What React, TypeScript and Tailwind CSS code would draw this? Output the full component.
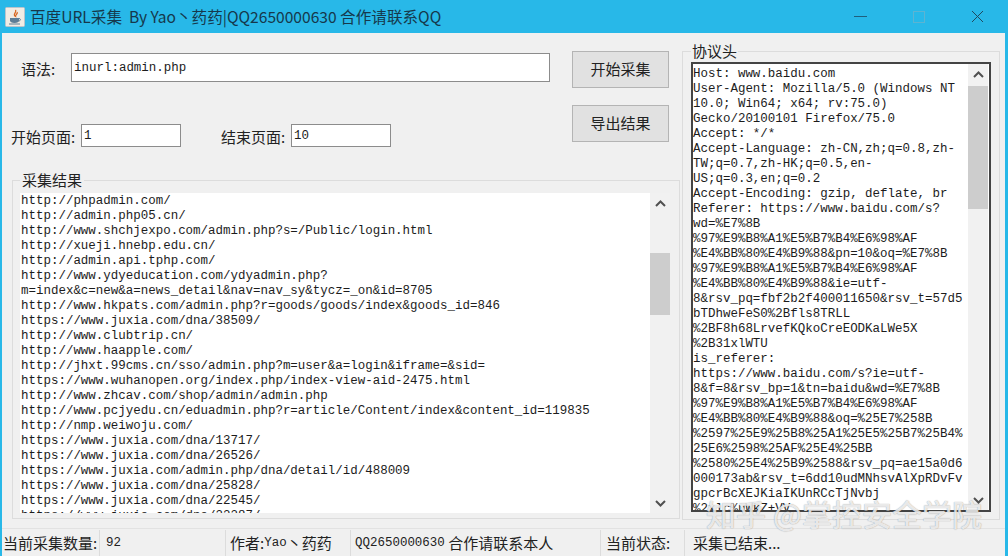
const CJK = "font-['Noto_Sans_CJK_SC','Noto_Sans',sans-serif]";
const MONO = "font-['Liberation_Mono','Noto_Sans_CJK_SC',monospace]";

const RESULT_LINES = [
	"http://phpadmin.com/",
	"http://admin.php05.cn/",
	"http://www.shchjexpo.com/admin.php?s=/Public/login.html",
	"http://xueji.hnebp.edu.cn/",
	"http://admin.api.tphp.com/",
	"http://www.ydyeducation.com/ydyadmin.php?",
	"m=index&c=new&a=news_detail&nav=nav_sy&tycz=_on&id=8705",
	"http://www.hkpats.com/admin.php?r=goods/goods/index&goods_id=846",
	"https://www.juxia.com/dna/38509/",
	"http://www.clubtrip.cn/",
	"http://www.haapple.com/",
	"http://jhxt.99cms.cn/sso/admin.php?m=user&a=login&iframe=&sid=",
	"https://www.wuhanopen.org/index.php/index-view-aid-2475.html",
	"http://www.zhcav.com/shop/admin/admin.php",
	"http://www.pcjyedu.cn/eduadmin.php?r=article/Content/index&content_id=119835",
	"http://nmp.weiwoju.com/",
	"https://www.juxia.com/dna/13717/",
	"https://www.juxia.com/dna/26526/",
	"https://www.juxia.com/admin.php/dna/detail/id/488009",
	"https://www.juxia.com/dna/25828/",
	"https://www.juxia.com/dna/22545/",
	"https://www.juxia.com/dna/22287/",
];

const HEADER_LINES = [
	"Host: www.baidu.com",
	"User-Agent: Mozilla/5.0 (Windows NT",
	"10.0; Win64; x64; rv:75.0)",
	"Gecko/20100101 Firefox/75.0",
	"Accept: */*",
	"Accept-Language: zh-CN,zh;q=0.8,zh-",
	"TW;q=0.7,zh-HK;q=0.5,en-",
	"US;q=0.3,en;q=0.2",
	"Accept-Encoding: gzip, deflate, br",
	"Referer: https://www.baidu.com/s?",
	"wd=%E7%8B",
	"%97%E9%B8%A1%E5%B7%B4%E6%98%AF",
	"%E4%BB%80%E4%B9%88&pn=10&oq=%E7%8B",
	"%97%E9%B8%A1%E5%B7%B4%E6%98%AF",
	"%E4%BB%80%E4%B9%88&ie=utf-",
	"8&rsv_pq=fbf2b2f400011650&rsv_t=57d5",
	"bTDhweFeS0%2Bfls8TRLL",
	"%2BF8h68LrvefKQkoCreEODKaLWe5X",
	"%2B31xlWTU",
	"is_referer:",
	"https://www.baidu.com/s?ie=utf-",
	"8&f=8&rsv_bp=1&tn=baidu&wd=%E7%8B",
	"%97%E9%B8%A1%E5%B7%B4%E6%98%AF",
	"%E4%BB%80%E4%B9%88&oq=%25E7%258B",
	"%2597%25E9%25B8%25A1%25E5%25B7%25B4%",
	"25E6%2598%25AF%25E4%25BB",
	"%2580%25E4%25B9%2588&rsv_pq=ae15a0d6",
	"000173ab&rsv_t=6dd10udMNhsvAlXpRDvFv",
	"gpcrBcXEJKiaIKUnRCcTjNvbj",
	"%2xlc%uWkZ+VV",
];

const JavaIcon = () => (
	<svg width="20" height="20" viewBox="0 0 20 20" className="shrink-0">
		<rect x="0.5" y="0.5" width="19" height="19" rx="1" fill="#f1ece4" stroke="#b9c4cc" />
		<path d="M10.5 3c1.500 2-2 3.500-1 5.500.4.8 1 1 1 1-.6-1.400 2.800-2.800 1.600-4.500" fill="none" stroke="#d9661f" strokeWidth="1.300" />
		<path d="M5 11h9v2.500c0 1.500-1.500 2.500-4.500 2.500S5 15 5 13.500z" fill="#5d7d96" />
		<path d="M14 11.500c2 0 2 2.500-.5 2.500" fill="none" stroke="#5d7d96" />
		<path d="M4 17h11" stroke="#5d7d96" />
	</svg>
);

const Chevron = ({ down }: { down?: boolean }) => (
	<svg width="11" height="7" viewBox="0 0 11 7">
		<path
			d={down ? "M1 1l4.500 4.500L10 1" : "M1 6l4.500-4.500L10 6"}
			fill="none"
			stroke="#505050"
			strokeWidth="2"
		/>
	</svg>
);

const ScrollBar = ({ thumbTop, thumbHeight }: { thumbTop: string; thumbHeight: string }) => (
	<div className="w-5 shrink-0 h-full flex flex-col items-center bg-[#f1f1f1]">
		<div className="h-5 flex items-center justify-center shrink-0">
			<Chevron />
		</div>
		<div className={`w-full bg-[#cdcdcd] ${thumbTop} ${thumbHeight}`} />
		<div className="mt-auto h-5 flex items-center justify-center shrink-0">
			<Chevron down />
		</div>
	</div>
);

const TextLines = ({ lines, className }: { lines: string[]; className: string }) => (
	<div className={`flex-1 overflow-hidden whitespace-pre leading-[15px] text-[12.47px] text-[#1c1c1c] ${MONO} ${className}`}>
		{lines.map((line, i) => (
			<div key={i}>{line}</div>
		))}
	</div>
);

const ActionButton = ({ label, className }: { label: string; className?: string }) => (
	<button
		type="button"
		className={`block w-[97px] h-[37px] bg-[#e1e1e1] border border-[#b4b4b4] text-[15px] text-[#222] ${CJK} ${className || ""}`}
	>
		{label}
	</button>
);

const StatusCell = ({ className, children }: { className: string; children: React.ReactNode }) => (
	<div className={`h-full flex items-center border-r border-[#dcdcdc] whitespace-pre ${className}`}>
		{children}
	</div>
);

const App = () => {
	return (
		<div className={`relative w-[1008px] h-[556px] overflow-hidden flex flex-col bg-[#28b8e8] ${CJK}`}>
			{/* title bar */}
			<div className="h-[33px] shrink-0 flex items-center pl-[5px] text-[#16384c]">
				<JavaIcon />
				<span className="ml-[5px] text-[15.6px] whitespace-pre">
					百度URL采集  By Yao丶药药|QQ2650000630 合作请联系QQ
				</span>
				<div className="ml-auto flex items-center">
					<div className="w-[13px] h-px bg-[#1f5f7d] mr-[46px]" />
					<div className="w-[12px] h-[12px] border border-[#5cb4d2] mr-[46px]" />
					<svg width="13" height="13" viewBox="0 0 13 13" className="mr-[24px]">
						<path d="M1 1l11 11M12 1L1 12" stroke="#1f4a60" strokeWidth="1" />
					</svg>
				</div>
			</div>

			{/* window body */}
			<div className="flex-1 min-h-0 ml-[2px] mr-[3px] bg-[#f0f0f0] flex flex-col">
				<div className="flex-1 min-h-0 flex">
					<div className="w-[680px] shrink-0 flex flex-col">
						<div className="flex">
							<div className="w-[570px] shrink-0">
								<div className="flex items-center mt-[20px] pl-[19px] h-[29px]">
									<span className="w-[50px] pt-[3px] text-[15px] text-[#222]">语法:</span>
									<input
										readOnly
										value="inurl:admin.php"
										className={`w-[479px] h-[29px] px-[2px] bg-white border border-[#8c8c8c] text-[12.47px] text-[#1c1c1c] outline-none ${MONO}`}
									/>
								</div>
								<div className="flex items-center mt-[42px] pl-[9px] h-[23px]">
									<span className="w-[70px] pt-[3px] text-[15px] text-[#222] whitespace-pre">开始页面:</span>
									<input
										readOnly
										value="1"
										className={`w-[100px] h-[23px] px-[2px] bg-white border border-[#8c8c8c] text-[12.47px] text-[#1c1c1c] outline-none ${MONO}`}
									/>
									<span className="ml-[40px] w-[70px] pt-[3px] text-[15px] text-[#222] whitespace-pre">结束页面:</span>
									<input
										readOnly
										value="10"
										className={`w-[100px] h-[23px] px-[2px] bg-white border border-[#8c8c8c] text-[12.47px] text-[#1c1c1c] outline-none ${MONO}`}
									/>
								</div>
							</div>
							<div className="pt-[18px]">
								<ActionButton label="开始采集" />
								<ActionButton label="导出结果" className="mt-[17px]" />
							</div>
						</div>

						<fieldset className="mt-[24px] ml-[10px] mr-[2px] h-[348px] border border-[#dcdcdc] pl-[7px] pr-[9px] flex flex-col min-h-0">
							<legend className="px-[2px] text-[15px] leading-[18px] text-[#222]">采集结果</legend>
							<div className="mt-[4px] h-[320px] flex bg-white overflow-hidden">
								<TextLines lines={RESULT_LINES} className="pl-[1px] pt-[1px]" />
								<ScrollBar thumbTop="mt-[40px]" thumbHeight="h-[62px]" />
							</div>
						</fieldset>
					</div>

					<fieldset className="mt-[9px] w-[318px] h-[478px] border border-[#dcdcdc] px-[8px] flex flex-col min-h-0">
						<legend className="px-px text-[15px] leading-[18px] text-[#222]">协议头</legend>
						<div className="mt-[2px] h-[450px] flex bg-white border-2 border-[#444] overflow-hidden pr-[1px]">
							<TextLines lines={HEADER_LINES} className="pl-[0px] pt-[3px]" />
							<ScrollBar thumbTop="mt-[2px]" thumbHeight="h-[123px]" />
						</div>
					</fieldset>
				</div>

				{/* status bar */}
				<div className="h-[28px] shrink-0 flex items-center border-t border-[#e2e2e2] pt-[1px] text-[15px] text-[#222]">
					<StatusCell className="w-[98px] pl-[1px]">当前采集数量:</StatusCell>
					<StatusCell className={`w-[126px] pl-[6px] text-[12.47px] ${MONO}`}>92</StatusCell>
					<StatusCell className="w-[125px] pl-[4px]">
						作者:<span className={`text-[12.47px] ${MONO}`}>Yao</span>丶药药
					</StatusCell>
					<StatusCell className="w-[250px] pl-[4px]">
						<span className={`text-[12.47px] ${MONO}`}>QQ2650000630</span> 合作请联系本人
					</StatusCell>
					<StatusCell className="w-[84px] pl-[5px]">当前状态:</StatusCell>
					<div className="pl-[8px] whitespace-pre">采集已结束...</div>
				</div>
			</div>

			{/* site watermark */}
			<div className="absolute left-[706px] top-[493px] text-[30px] leading-[40px] whitespace-pre text-white/80 font-medium [text-shadow:0_0_1px_rgba(0,0,0,0.45)]">
				知乎 @掌控安全学院
			</div>
		</div>
	);
};

export default App;
